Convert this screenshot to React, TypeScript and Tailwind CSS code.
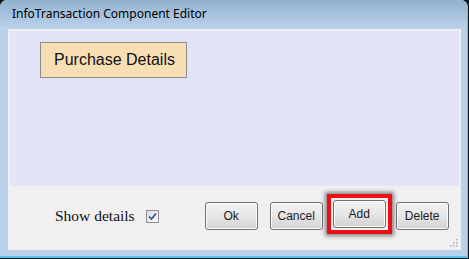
import React from "react";

const WinButton = ({ label }: { label: string }) => (
  <button className="w-[53px] h-[28px] rounded-[3px] border border-[#707070] bg-gradient-to-b from-[#f3f3f3] via-[#e6e6e6] to-[#d2d2d2] shadow-[inset_0_0_0_1px_#fcfcfc] text-[12px] text-[#1c1c1c] font-['Liberation_Sans',Arial,sans-serif] leading-none">
    {label}
  </button>
);

const App = () => {
  return (
    <div className="w-[469px] h-[259px] bg-[#151515] overflow-hidden">
      <div className="relative w-[468px] h-[258px] rounded-t-[7px] bg-[#b9d1ea] flex flex-col border-r border-b-2 border-[#5ec4ea] overflow-hidden">
        {/* Title bar */}
        <div className="h-[29px] shrink-0 bg-gradient-to-b from-[#92b1cf] to-[#bbd3ec] pl-[12px] pt-[8px] text-[12px] leading-none text-black font-['Noto_Sans',sans-serif]">
          InfoTransaction Component Editor
        </div>

        {/* Client area */}
        <div className="ml-[8px] mr-[6px] h-[221px] bg-[#f0f0f0] flex flex-col">
          <div className="m-[2px] mb-0 h-[155px] bg-[#e4e4f8] pl-[30px] pt-[11px]">
            <div className="w-[147px] h-[36px] bg-[#f8deb4] border border-[#8c8c8c] flex items-center pl-[13px] text-[16px] text-[#111] font-['Liberation_Sans',Arial,sans-serif]">
              Purchase Details
            </div>
          </div>

          <div className="relative flex-1 flex items-start pt-[16px]">
            <div className="flex items-center h-[28px] ml-[47px]">
              <span className="text-[15.5px] text-[#111] font-['Liberation_Serif',serif]">
                Show details
              </span>
              <span className="ml-[11px] w-[13px] h-[13px] border border-[#8e8f8f] bg-gradient-to-br from-[#dcdcdc] to-[#fafafa] flex items-center justify-center">
                <svg width="9" height="9" viewBox="0 0 9 9">
                  <path d="M1 4.5 L3.5 7 L8 1.5" stroke="#2a4f9a" strokeWidth="1.6" fill="none" />
                </svg>
              </span>
            </div>

            <div className="ml-[46px]">
              <WinButton label="Ok" />
            </div>
            <div className="ml-[12px]">
              <WinButton label="Cancel" />
            </div>
            <div className="ml-[4px] -mt-[8px] border-4 border-[#ee0f16] p-[2px] shadow-[0_0_4px_2px_rgba(0,0,0,0.45)]">
              <WinButton label="Add" />
            </div>
            <div className="ml-[4px]">
              <WinButton label="Delete" />
            </div>

            {/* size grip */}
            <svg className="absolute right-[2px] bottom-[2px]" width="10" height="10" viewBox="0 0 10 10">
              {[
                [7, 1],
                [4, 4],
                [7, 4],
                [1, 7],
                [4, 7],
                [7, 7],
              ].map(([x, y], i) => (
                <rect key={i} x={x} y={y} width="1.5" height="1.5" fill="#b0b0b0" />
              ))}
            </svg>
          </div>
        </div>
      </div>
    </div>
  );
};

export default App;
